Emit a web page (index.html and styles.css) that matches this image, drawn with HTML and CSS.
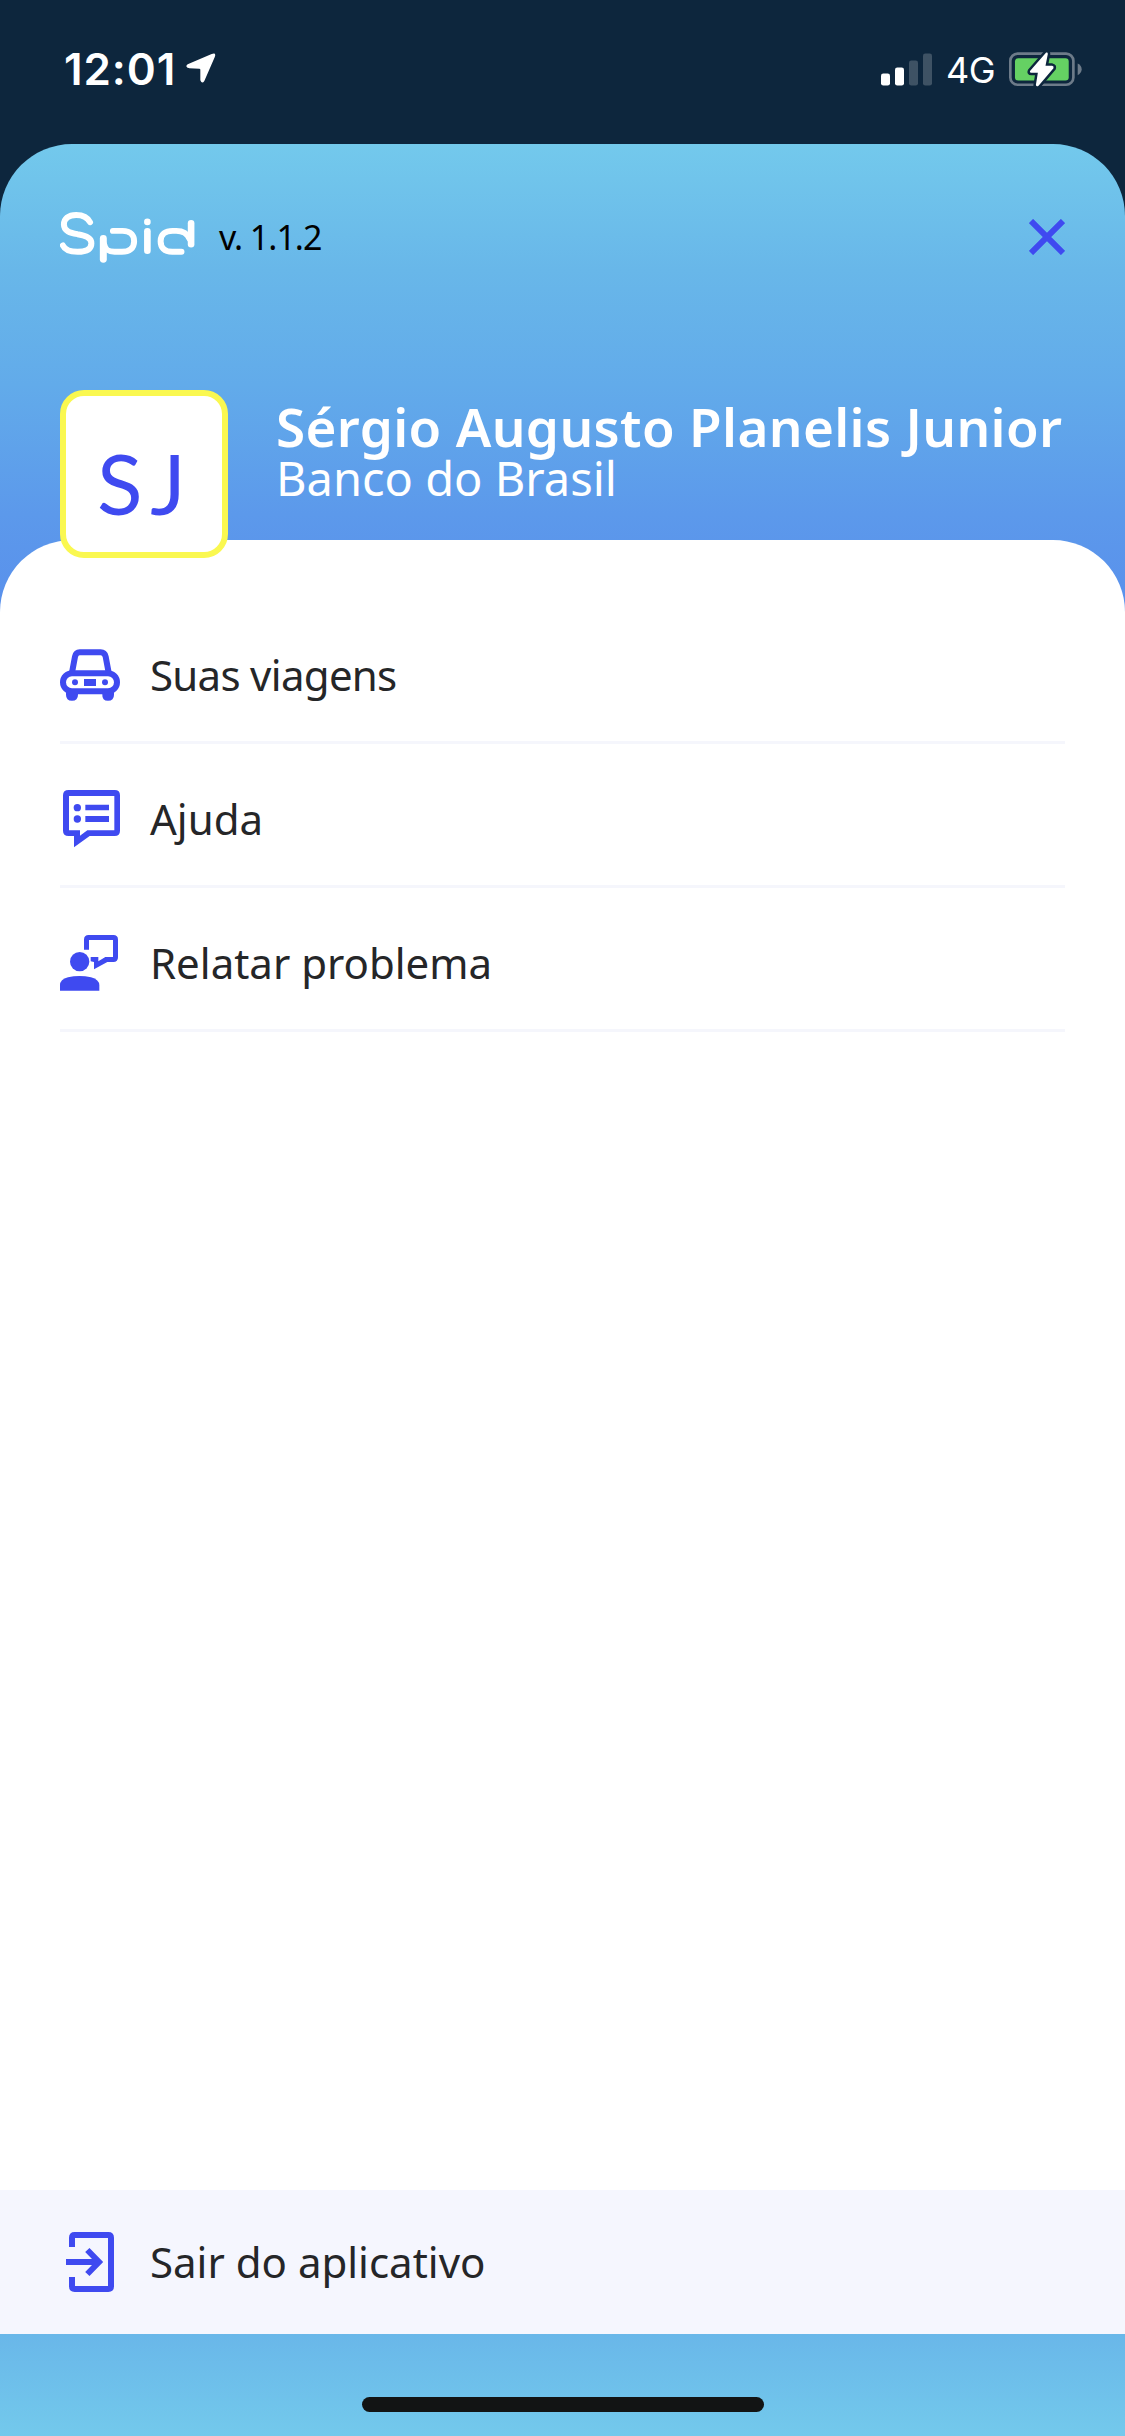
FILE: index.html
```html
<!DOCTYPE html>
<html lang="pt-BR">
<head>
<meta charset="utf-8">
<title>Spid</title>
<link rel="stylesheet" href="styles.css">
</head>
<body>
<div class="status">
  <span class="time">12:01</span>
  <svg class="location" viewBox="440 100 90 90"><path d="M517 103Q532 97 526 113L495 184Q488 194 483 182V150Q483 147 480 147L450 146Q435 142 445 134Z" fill="#fff"/></svg>
  <svg class="signal" viewBox="126 98 153 98" fill="#fff"><rect x="126" y="159" width="27" height="36" rx="7"/><rect x="168" y="141" width="27" height="54" rx="7"/><g opacity=".2"><rect x="210" y="120" width="27" height="75" rx="7"/><rect x="252" y="99" width="27" height="96" rx="7"/></g></svg>
  <span class="network">4G</span>
  <svg class="battery" viewBox="507 93 220 110"><rect x="511" y="100" width="190" height="94" rx="22" fill="none" stroke="#6d7b89" stroke-width="8"/><path d="M714 130Q726 136 726 147T714 165Z" fill="#6d7b89"/><rect x="525" y="114" width="162" height="67" rx="10" fill="#65d163"/><path d="M619 97L571 152Q568 158 574 158H594L588 195Q590 201 596 197L641 144Q643 138 637 137H617L624 101Q624 95 619 97Z" fill="#fff" stroke="#0d263d" stroke-width="15" paint-order="stroke"/></svg>
</div>
<div class="panel">
  <header class="topbar">
    <svg class="logo" role="img" aria-label="Spid" viewBox="60 570 406 160" fill="none" stroke="#fff" stroke-width="18" stroke-linecap="round"><path d="M150 604C142 588 127 582 108 582C84 582 71 594 71 611C71 631 90 636 112 640C140 644 154 652 154 667C154 686 136 693 112 693C90 693 75 689 68 674"/><path d="M190 653V716" stroke-width="21"/><path d="M219 630H248C274 630 283 646 283 661C283 683 268 693 246 693H224C204 693 196 687 193 672"/><path d="M323 631V690" stroke-width="20"/><path d="M323 603V603.1" stroke-width="20"/><path d="M455 607V670" stroke-width="20"/><path d="M426 693H398C374 693 363 680 363 661C363 640 378 630 399 630H410C430 630 444 638 450 654"/></svg>
    <span class="version">v. 1.1.2</span>
    <svg class="close" viewBox="0 0 36 36"><path d="M2 2L34 34M34 2L2 34" stroke="#3f4af0" stroke-width="6"/></svg>
  </header>
  <section class="profile">
    <div class="avatar">SJ</div>
    <div class="identity"><div class="name">Sérgio Augusto Planelis Junior</div><div class="company">Banco do Brasil</div></div>
  </section>
  <main class="sheet">
    <nav class="menu">
      <a class="item"><svg class="icon" viewBox="60 75 180 180" fill="#3f4af0"><g fill="none" stroke="#3f4af0" stroke-width="18"><path d="M96 158L105 110Q108 97 119 97H182Q194 97 197 110L206 158"/><rect x="69" y="160" width="162" height="54" rx="27"/></g><circle cx="105" cy="187" r="9"/><circle cx="195" cy="187" r="9"/><path d="M132 177H168V198H132ZM78 207H114V224Q114 242 96 242T78 224ZM187 207H222V224Q222 242 204 242T187 224Z"/></svg><span class="label trips">Suas viagens</span></a>
      <a class="item"><svg class="icon" viewBox="60 57 180 180" fill="#3f4af0"><path fill-rule="evenodd" d="M86 60H224Q240 60 240 76V182Q240 198 224 198H149L102 232V198H86Q69 198 69 182V76Q69 60 86 60ZM87 78V181H120V197L142 181H223V78Z"/><circle cx="112" cy="113" r="11"/><circle cx="112" cy="147" r="11"/><path d="M136 104H207V121H136ZM136 138H207V156H136Z"/></svg><span class="label">Ajuda</span></a>
      <a class="item"><svg class="icon" viewBox="60 69 180 180" fill="#3f4af0"><circle cx="119" cy="155" r="29"/><path d="M60 242V226Q60 208 84 202Q118 194 153 202Q178 209 178 226V242Z"/><path d="M132 119V89Q132 75 146 75H220Q234 75 234 89V142Q234 156 220 156H202L162 178V156L152 154V141H175V154L196 141H219V90H147V119Z"/></svg><span class="label">Relatar problema</span></a>
    </nav>
    <a class="logout"><svg class="icon" viewBox="60 186 180 180" fill="none" stroke="#3f4af0" stroke-width="18"><path d="M96 231V203Q96 195 104 195H205Q213 195 213 203V349Q213 357 205 357H104Q96 357 96 349V321M78 276H174M142 240L177 276L142 312"/></svg><span class="label">Sair do aplicativo</span></a>
  </main>
  <footer class="bottom"><div class="indicator"></div></footer>
</div>
</body>
</html>
```
FILE: styles.css
```css
* { box-sizing: border-box; }
body { margin: 0; width: 1125px; height: 2436px; background: #0d263d; color: #252628; font-family: "Noto Sans", sans-serif; display: flex; flex-direction: column; }
svg { display: block; flex: none; }
span { white-space: nowrap; }
.status { height: 144px; padding: 0 43px 6px 64px; display: flex; align-items: center; color: #fff; font-family: Inter, sans-serif; flex: none; }
.time { font-size: 44px; font-weight: 600; width: 122px; letter-spacing: 0.9px; }
.location { width: 30px; height: 30px; margin-bottom: 3px; }
.signal { width: 51px; height: 33px; margin-left: auto; margin-right: 14px; }
.network { font-size: 36px; width: 63px; padding-top: 1px; letter-spacing: -0.5px; }
.battery { width: 73px; height: 37px; }
.panel { flex: 1; display: flex; flex-direction: column; border-radius: 72px 72px 0 0; background: linear-gradient(#73c9ec 0, #68b7e9 126px, #62abea 240px, #5c99eb 370px, #5990ec 470px); overflow: hidden; }
.topbar { height: 186px; padding: 0 60px; display: flex; align-items: center; flex: none; }
.logo { width: 135px; height: 53px; }
.version { color: #000; font-size: 34px; letter-spacing: -1px; margin-left: 24px; }
.close { width: 36px; height: 36px; margin-left: auto; }
.profile { height: 210px; padding: 60px 0 0 60px; display: flex; gap: 48px; flex: none; color: #fff; position: relative; z-index: 1; }
.avatar { width: 168px; height: 168px; flex: none; border: 6px solid #faf850; border-radius: 24px; background: #fff; color: #3f4af0; font-family: Lato, sans-serif; font-size: 84px; letter-spacing: 8px; line-height: 173px; padding-left: 31px; }
.identity { padding-top: 12px; white-space: nowrap; }
.name { font-size: 53px; font-weight: 600; line-height: 50px; letter-spacing: 0.35px; }
.company { font-size: 47px; line-height: 52px; }
.sheet { flex: 1; background: #fff; border-radius: 72px 72px 0 0; display: flex; flex-direction: column; padding-top: 60px; font-size: 42px; }
.menu { padding: 0 60px; }
.item, .logout { height: 144px; display: flex; align-items: center; gap: 30px; }
.item { padding-top: 9px; border-bottom: 3px solid #f5f6fc; }
.icon { width: 60px; height: 60px; }
.label { padding-bottom: 2px; }
.trips { letter-spacing: -0.7px; }
.logout { margin-top: auto; padding: 0 60px; background: #f5f6fe; }
.bottom { height: 102px; flex: none; display: flex; justify-content: center; padding-top: 63px; background: linear-gradient(#69b7e9, #73c9ec); }
.indicator { width: 402px; height: 15px; border-radius: 8px; background: #121414; }
```
